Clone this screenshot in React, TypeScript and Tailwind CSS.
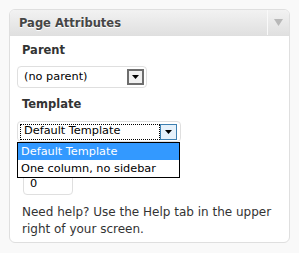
import React from "react";

const font = { fontFamily: '"DejaVu Sans", Verdana, sans-serif' };

function Arrow() {
  return (
    <svg width="7" height="4" viewBox="0 0 7 4">
      <polygon points="0,0 7,0 3.5,4" fill="#000" />
    </svg>
  );
}

export default function App() {
  return (
    <div className="w-[299px] h-[253px] bg-[#f9f9f9] pt-[9px] pl-[9px]" style={font}>
      <div className="w-[281px] h-[234px] border border-[#dfdfdf] rounded-[6px] bg-white overflow-hidden">
        <div className="h-[26px] flex bg-gradient-to-b from-[#f2f2f2] to-[#e0e0e0] border-b border-[#dfdfdf]">
          <div className="flex-1 pl-[9px] pt-[5px] text-[11.5px] font-bold text-[#464646] [text-shadow:0_1px_0_#fff]">
            Page Attributes
          </div>
          <div className="w-[22px] border-l border-[#f9f9f9] flex items-center justify-center">
            <svg width="9" height="7" viewBox="0 0 9 7">
              <polygon points="0,0 9,0 4.5,7" fill="#b8b8b8" />
            </svg>
          </div>
        </div>
        <div className="px-[7px] text-[#333]">
          <div className="pl-[5px] pt-[6px] text-[11.5px] leading-[16px] font-bold">Parent</div>
          <div className="mt-[8px] w-[130px] h-[22px] border border-[#dfdfdf] rounded-[4px] flex items-center pl-[6px] pr-[2px]">
            <span className="flex-1 text-[11.3px] text-black">(no parent)</span>
            <div className="w-[17px] h-[16px] border-2 border-[#6d6d6d] bg-[#f0f0f0] flex items-center justify-center">
              <Arrow />
            </div>
          </div>
          <div className="pl-[5px] pt-[8px] text-[11.5px] leading-[16px] font-bold">Template</div>
          <div className="relative mt-[9px] w-[164px]">
            <div className="h-[21px] border border-[#dfdfdf] rounded-[4px] flex items-center pl-[2px] pr-[3px] py-[1px]">
              <div className="flex-1 h-[16px] border border-dotted border-black flex items-center pl-[3px] text-[11.3px] text-black">
                Default Template
              </div>
              <div className="w-[17px] h-[16px] border border-[#3c7fb1] bg-[#e5f1fb] flex items-center justify-center">
                <Arrow />
              </div>
            </div>
            <div className="absolute left-0 top-[21px] w-[163px] border border-black bg-white z-10 text-[11.3px] text-black leading-[17px]">
              <div className="bg-[#3399ff] text-white pl-[3px]">Default Template</div>
              <div className="pl-[3px]">One column, no sidebar</div>
            </div>
          </div>
          <div className="pl-[5px] pt-[8px] text-[11.5px] leading-[16px] font-bold">Order</div>
          <div className="mt-[7px] ml-[6px] w-[50px] h-[22px] border border-[#dfdfdf] rounded-[4px] flex items-center pl-[6px] text-[11.3px] text-black">
            0
          </div>
          <p className="pl-[5px] pt-[9px] text-[12px] leading-[17px]">
            Need help? Use the Help tab in the upper right of your screen.
          </p>
        </div>
      </div>
    </div>
  );
}
